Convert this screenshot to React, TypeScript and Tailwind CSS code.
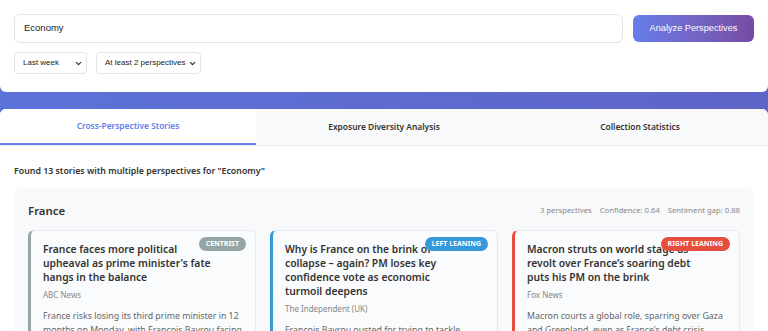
import React from "react";

type Article = {
  lean: "centrist" | "left" | "right";
  title: string;
  source: string;
  desc: string;
};

const articles: Article[] = [
  {
    lean: "centrist",
    title: "France faces more political upheaval as prime minister's fate hangs in the balance",
    source: "ABC News",
    desc: "France risks losing its third prime minister in 12 months on Monday, with François Bayrou facing a confidence vote he is widely expected to lose.",
  },
  {
    lean: "left",
    title: "Why is France on the brink of collapse – again? PM loses key confidence vote as economic turmoil deepens",
    source: "The Independent (UK)",
    desc: "François Bayrou ousted for trying to tackle France's mounting debt with unpopular budget cuts.",
  },
  {
    lean: "right",
    title: "Macron struts on world stage as revolt over France’s soaring debt puts his PM on the brink",
    source: "Fox News",
    desc: "Macron courts a global role, sparring over Gaza and Greenland, even as France's debt crisis threatens his government.",
  },
];

const leanStyle = {
  centrist: { border: "border-l-[#95a5a6]", badge: "bg-[#95a5a6]", label: "Centrist" },
  left: { border: "border-l-[#3498db]", badge: "bg-[#3498db]", label: "Left Leaning" },
  right: { border: "border-l-[#e74c3c]", badge: "bg-[#e74c3c]", label: "Right Leaning" },
};

const Chevron = () => (
  <svg width="7" height="5" viewBox="0 0 7 5" className="ml-auto">
    <path d="M1 1.2 L3.5 3.7 L6 1.2" fill="none" stroke="#333" strokeWidth="1.2" />
  </svg>
);

function ArticleCard({ a }: { a: Article }) {
  const s = leanStyle[a.lean];
  return (
    <div className={`relative bg-[#fafbfc] border border-[#e4e7eb] border-l-[3px] ${s.border} rounded-md pl-[12px] pr-[8px] pt-[11px] h-[120px]`}>
      <span className={`absolute top-[6px] right-[9px] ${s.badge} text-white text-[7px] font-bold uppercase rounded-full px-[7px] h-[14px] flex items-center`}>
        {s.label}
      </span>
      <h3 className="text-[10.3px] leading-[14px] font-semibold text-[#333] pr-[35px]">{a.title}</h3>
      <div className="mt-[5px] text-[8px] leading-[12px] text-[#888]">{a.source}</div>
      <p className="mt-[8px] text-[8.8px] leading-[14px] text-[#666]">{a.desc}</p>
    </div>
  );
}

export default function App() {
  return (
    <div className="min-h-screen bg-gradient-to-r from-[#5c72d9] to-[#5f64c7] overflow-hidden" style={{ fontFamily: "'Noto Sans', 'Open Sans', sans-serif" }}>
      <div className="bg-white rounded-b-[6px] h-[92px] px-[14px] pt-[14px]">
        <div className="flex gap-[10px] items-center" style={{ fontFamily: "'Liberation Sans', Arial, sans-serif" }}>
          <div className="flex-1 h-[29px] border border-[#e1e4e8] rounded-md flex items-center px-[9px] text-[9.5px] text-[#222]">
            Economy
          </div>
          <button className="w-[121px] h-[27px] rounded-md bg-gradient-to-r from-[#667eea] to-[#764ba2] text-white text-[9.2px]">
            Analyze Perspectives
          </button>
        </div>
        <div className="flex gap-[9px] mt-[9px]" style={{ fontFamily: "'Liberation Sans', Arial, sans-serif" }}>
          <div className="w-[73px] h-[22px] border border-[#e1e4e8] rounded flex items-center pl-[8px] pr-[4px] text-[8px] text-[#222]">
            Last week
            <Chevron />
          </div>
          <div className="w-[105px] h-[22px] border border-[#e1e4e8] rounded flex items-center pl-[8px] pr-[4px] text-[8px] text-[#222]">
            At least 2 perspectives
            <Chevron />
          </div>
        </div>
      </div>

      <div className="mt-[17px] bg-white rounded-t-[6px] overflow-hidden h-[240px]">
        <div className="flex bg-[#f8f9fa] border-b border-[#e9ecef]">
          <div className="flex-1 h-[36px] flex items-center justify-center bg-white border-b-2 border-[#667eea] text-[8.4px] font-semibold text-[#667eea]">
            Cross-Perspective Stories
          </div>
          <div className="flex-1 h-[36px] flex items-center justify-center text-[8.4px] font-semibold text-[#333]">
            Exposure Diversity Analysis
          </div>
          <div className="flex-1 h-[36px] flex items-center justify-center text-[8.4px] font-semibold text-[#333]">
            Collection Statistics
          </div>
        </div>

        <div className="px-[14px] pt-[18px]">
          <p className="text-[8.8px] leading-[14px] font-semibold text-[#333]">
            Found 13 stories with multiple perspectives for "Economy"
          </p>
          <div className="mt-[10px] bg-[#f8f9fa] rounded-lg px-[14px] pt-[14px] pb-[14px]">
            <div className="flex items-center justify-between">
              <h2 className="text-[11.4px] leading-[18px] font-semibold text-[#333]">France</h2>
              <div className="flex gap-[8px] text-[7.7px] text-[#888]">
                <span>3 perspectives</span>
                <span>Confidence: 0.64</span>
                <span>Sentiment gap: 0.88</span>
              </div>
            </div>
            <div className="grid grid-cols-3 gap-[14px] mt-[10px]">
              {articles.map((a) => (
                <ArticleCard key={a.source} a={a} />
              ))}
            </div>
          </div>
        </div>
      </div>
    </div>
  );
}
